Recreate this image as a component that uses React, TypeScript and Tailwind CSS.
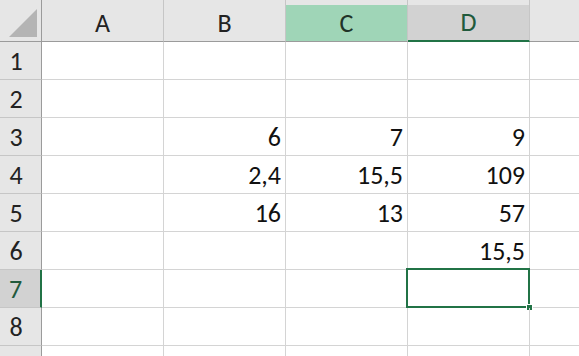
const cols = ["A", "B", "C", "D"];

const data: Record<number, string[]> = {
  3: ["", "6", "7", "9"],
  4: ["", "2,4", "15,5", "109"],
  5: ["", "16", "13", "57"],
  6: ["", "", "", "15,5"],
};

const font = { fontFamily: '"Carlito", Lato, "Open Sans", sans-serif' };

const App = () => {
  const rows = [1, 2, 3, 4, 5, 6, 7, 8, 9];

  return (
    <div className="w-[579px] h-[356px] overflow-hidden bg-white text-[26px] text-[#111]" style={font}>
      <div className="grid grid-cols-[42px_repeat(4,122px)_1fr] grid-rows-[42px_repeat(9,38px)]">
        {/* corner */}
        <div className="bg-[#e6e6e6] border-r border-b border-[#9b9b9b] flex items-end justify-end p-[4px] pt-[7px]">
          <div className="w-[28px] h-[28px] bg-[#b4b4b4] [clip-path:polygon(100%_0,100%_100%,0_100%)]"></div>
        </div>

        {/* column headers */}
        {cols.map((c) => {
          const sel = c === "C";
          const act = c === "D";
          return (
            <div
              key={c}
              className={
                "bg-[#e6e6e6] border-r border-[#c6c6c6] flex flex-col pt-[5px] " +
                (act ? "border-b-2 border-b-[#217346]" : "border-b border-b-[#9b9b9b]")
              }
            >
              <div
                className={
                  "flex-1 flex items-center justify-center leading-none pb-[1px] " +
                  (sel ? "bg-[#9fd5b7] text-[#1f3328]" : act ? "bg-[#d2d2d2] text-[#215a3c]" : "text-[#222]")
                }
              >
                {c}
              </div>
            </div>
          );
        })}
        <div className="bg-[#e6e6e6] border-b border-[#9b9b9b]"></div>

        {rows.map((r) => (
          <div key={r} className="contents">
            <div
              className={
                "flex items-center justify-center pr-[9px] leading-none " +
                (r === 7
                  ? "bg-[#d2d2d2] text-[#215a3c] border-r-2 border-r-[#217346] border-b border-b-[#c6c6c6]"
                  : "bg-[#e6e6e6] text-[#222] border-r border-r-[#9b9b9b] border-b border-b-[#c6c6c6]")
              }
            >
              {r < 9 ? r : ""}
            </div>
            {cols.map((c, i) => (
              <div
                key={c}
                className="relative border-r border-b border-[#d4d4d4] flex items-end justify-end pr-[4px] pb-[5px] leading-none"
              >
                {data[r]?.[i] ?? ""}
                {r === 7 && c === "D" && (
                  <div className="absolute -left-[2px] -top-[2px] -right-[1px] -bottom-[1px] border-2 border-[#217346]">
                    <div className="absolute -right-[5px] -bottom-[5px] w-[7px] h-[7px] bg-[#217346] border border-white"></div>
                  </div>
                )}
              </div>
            ))}
            <div className="border-b border-[#d4d4d4]"></div>
          </div>
        ))}
      </div>
    </div>
  );
};

export default App;
